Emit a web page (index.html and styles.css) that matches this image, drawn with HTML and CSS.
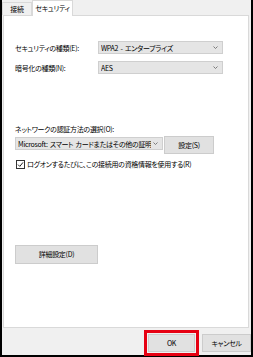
FILE: index.html
```html
<!DOCTYPE html>
<html lang="ja">
<head>
<meta charset="utf-8">
<link rel="stylesheet" href="styles.css">
</head>
<body>
<div class="dialog">
  <div class="tabs">
    <div class="tab">接続</div>
    <div class="tab active">セキュリティ</div>
  </div>
  <div class="panel">
    <div class="row first">
      <span class="label">セキュリティの種類(E):</span>
      <div class="combo wide"><span class="val">WPA2 - エンタープライズ</span><svg class="chev" width="5" height="3" viewBox="0 0 5 3"><polyline points="0.5,0.5 2.5,2.5 4.5,0.5" fill="none" stroke="#707070" stroke-width="0.9"/></svg></div>
    </div>
    <div class="row second">
      <span class="label">暗号化の種類(N):</span>
      <div class="combo wide"><span class="val">AES</span><svg class="chev" width="5" height="3" viewBox="0 0 5 3"><polyline points="0.5,0.5 2.5,2.5 4.5,0.5" fill="none" stroke="#707070" stroke-width="0.9"/></svg></div>
    </div>
    <div class="auth-label">ネットワークの認証方法の選択(O):</div>
    <div class="auth-row">
      <div class="combo auth"><span class="val">Microsoft: スマート カードまたはその他の証明書</span><svg class="chev" width="5" height="3" viewBox="0 0 5 3"><polyline points="0.5,0.5 2.5,2.5 4.5,0.5" fill="none" stroke="#707070" stroke-width="0.9"/></svg></div>
      <div class="btn set">設定(S)</div>
    </div>
    <div class="check">
      <span class="box"><svg width="7" height="7" viewBox="0 0 7 7"><polyline points="1,3.6 2.8,5.4 6,1.4" fill="none" stroke="#222" stroke-width="1"/></svg></span>
      <span>ログオンするたびに、この接続用の資格情報を使用する(R)</span>
    </div>
    <div class="btn adv">詳細設定(D)</div>
  </div>
  <div class="footer">
    <div class="btn ok">OK<span class="highlight"></span></div>
    <div class="btn cancel">キャンセル</div>
  </div>
</div>
</body>
</html>
```
FILE: styles.css
```css
html, body {
  margin: 0;
  padding: 0;
  background: #ffffff;
}
.dialog {
  position: relative;
  width: 253px;
  height: 357px;
  box-sizing: border-box;
  background: #f0f0f0;
  border: 2px solid #000;
  border-top: 0;
  font-family: "Noto Sans CJK JP", "Noto Sans", sans-serif;
  font-size: 7px;
  letter-spacing: -0.3px;
  word-spacing: 1px;
  line-height: 12px;
  color: #000;
  font-feature-settings: "palt";
  white-space: nowrap;
}
.tabs {
  display: flex;
  height: 15px;
  align-items: flex-end;
}
.tab {
  height: 13px;
  box-sizing: border-box;
  padding: 0;
  border: 1px solid #d9d9d9;
  border-bottom: 0;
  line-height: 12px;
  background: #f0f0f0;
  width: 30px;
  text-align: center;
}
.tab.active {
  height: 16px;
  margin-bottom: -1px;
  background: #fff;
  width: 41px;
  line-height: 14px;
  position: relative;
  z-index: 1;
  border-left: 1px solid #d9d9d9;
}
.panel {
  margin: 0 2px 0 1px;
  height: 313px;
  box-sizing: border-box;
  background: #fff;
  border: 1px solid #d9d9d9;
  padding: 0 0 0 11px;
}
.row {
  display: flex;
  align-items: center;
  height: 13px;
}
.row.first { margin-top: 25px; }
.row.second { margin-top: 7px; }
.label {
  width: 83px;
  flex: none;
}
.combo {
  display: flex;
  align-items: center;
  box-sizing: border-box;
  height: 13px;
  background: #e5e5e5;
  border: 1px solid #cfcfcf;
  padding: 0 0 0 2px;
  overflow: hidden;
}
.combo.wide { width: 125px; }
.combo .val {
  flex: 1;
  min-width: 0;
  white-space: nowrap;
  overflow: hidden;
}
.chev {
  flex: none;
  margin: 0 4px 0 2px;
}
.auth-label {
  margin-top: 49px;
}
.auth-row {
  display: flex;
  align-items: flex-start;
  margin-top: 1px;
}
.combo.auth {
  width: 148px;
  flex: none;
  margin-top: 1px;
}
.btn {
  box-sizing: border-box;
  background: #e1e1e1;
  border: 1px solid #cccccc;
  text-align: center;
}
.btn.set {
  width: 50px;
  flex: none;
  height: 18px;
  line-height: 16px;
  margin-left: 1px;
}
.check {
  display: flex;
  align-items: center;
  margin-top: 4px;
  height: 12px;
  margin-left: 1px;
}
.box {
  display: flex;
  align-items: center;
  justify-content: center;
  width: 9px;
  height: 9px;
  box-sizing: border-box;
  border: 1px solid #333;
  background: #fff;
  margin-right: 2px;
}
.btn.adv {
  width: 83px;
  height: 19px;
  line-height: 17px;
  margin-top: 75px;
}
.footer {
  display: flex;
  justify-content: flex-end;
  gap: 7px;
  margin: 6px 0 0 0;
}
.btn.ok {
  position: relative;
  width: 47px;
  height: 18px;
  line-height: 16px;
}
.btn.cancel {
  width: 49px;
  height: 18px;
  line-height: 16px;
}
.highlight {
  position: absolute;
  left: -5px;
  top: -5px;
  right: -5px;
  bottom: -5px;
  border: 3px solid #e60012;
}
```
